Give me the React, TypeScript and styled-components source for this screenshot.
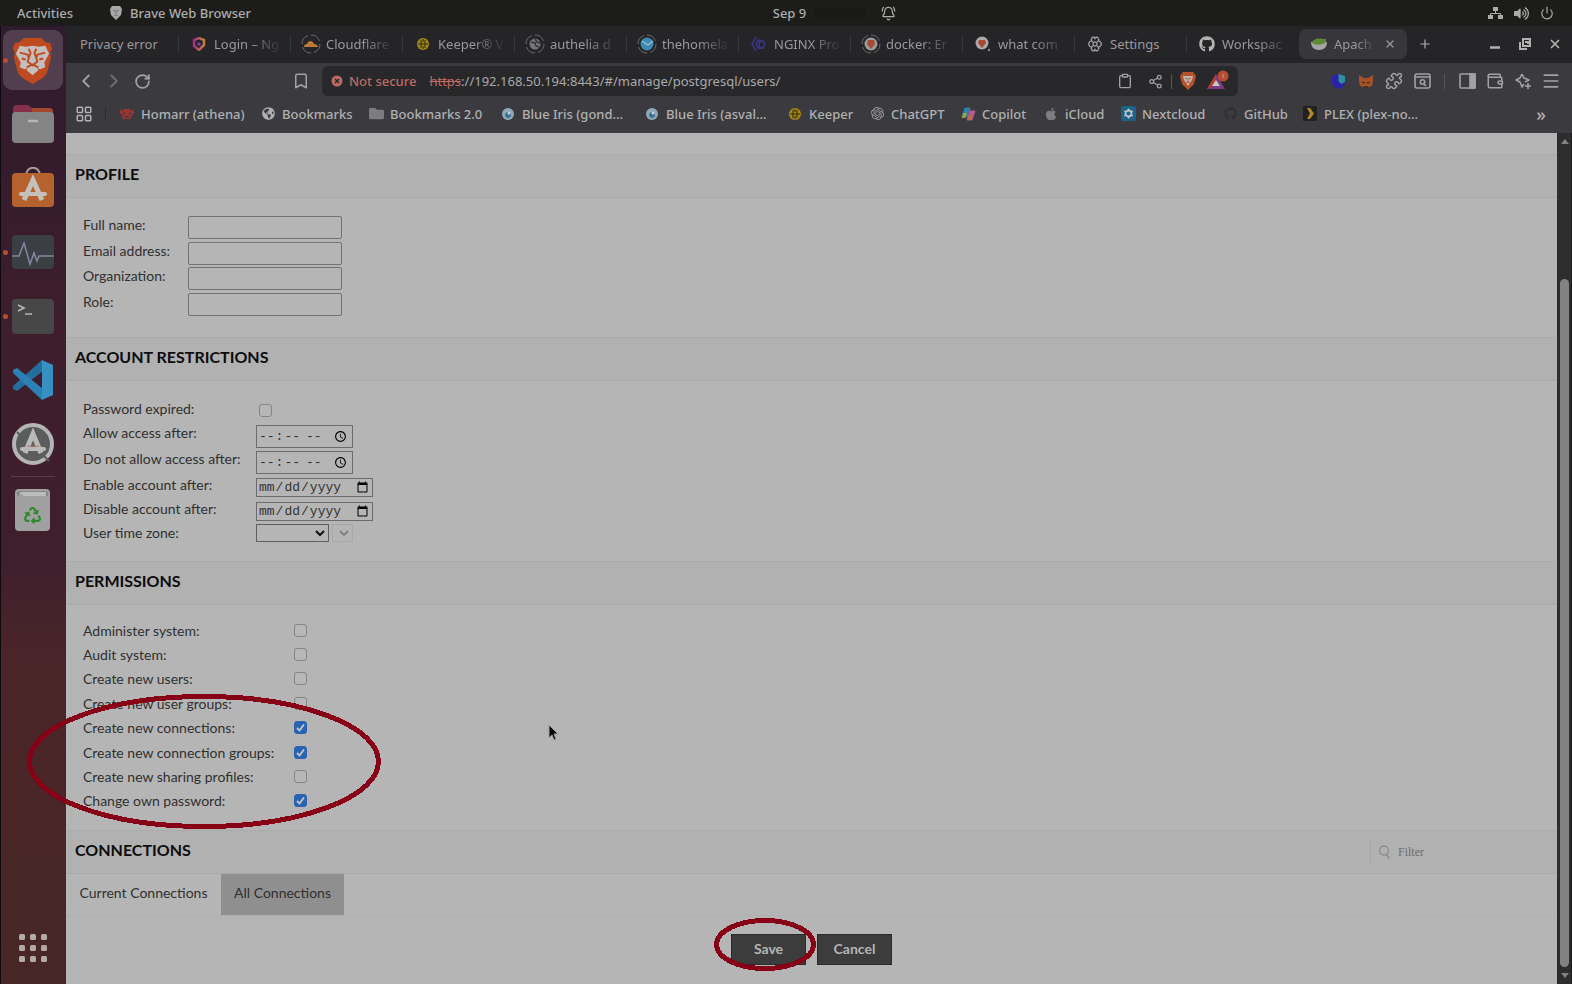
import React from 'react';
import styled, { createGlobalStyle } from 'styled-components';
import {
  ChevronLeft, ChevronRight, RotateCw, Bookmark as BookmarkIcon, Clipboard, Share2, Puzzle,
  Wallet, Menu, X, Plus, LayoutGrid, BellRing, Power,
} from 'lucide-react';
import { FaGithub, FaApple, FaRecycle, FaFolder, FaVolumeUp, FaGlobeAmericas } from 'react-icons/fa';
import { SiOpenai } from 'react-icons/si';

const ui = '"Noto Sans", "Open Sans", sans-serif';
const doc = 'Lato, "Liberation Sans", sans-serif';

const GlobalStyle = createGlobalStyle`
  *, *::before, *::after { box-sizing: border-box; }
  body { margin: 0; background: #1c1c1b; font-family: ${ui}; overflow: hidden; }
  button, input, select { font: inherit; color: inherit; margin: 0; }
  button { border: 0; padding: 0; background: none; }
  a { color: inherit; text-decoration: none; }
  svg { display: block; flex: none; }
`;

const Desktop = styled.div`
  position: relative;
  display: grid;
  grid-template: 26px 1fr / 66px minmax(0, 1fr);
  min-height: 100vh;
`;

const TopBar = styled.header`
  grid-column: 1 / -1;
  display: grid;
  grid-template-columns: 1fr auto 1fr;
  align-items: center;
  padding: 0 18px 0 17px;
  background: #1c1c1b;
  color: #acacaa;
  font-size: 13px;
  font-weight: 500;
`;
const TopGroup = styled.div<{ $end?: boolean }>`
  display: flex;
  align-items: center;
  justify-content: ${(p) => (p.$end ? 'flex-end' : 'flex-start')};
  gap: ${(p) => (p.$end ? 11 : 36)}px;
`;
const AppName = styled.button`
  display: flex;
  align-items: center;
  gap: 7px;
`;
const Clock = styled.div`
  display: flex;
  align-items: center;
  gap: 9px;
  padding-left: 98px;
`;
const ClockBlank = styled.span`
  width: 50px;
  height: 11px;
  margin-right: 7px;
  background: #191916;
`;

const Dock = styled.nav`
  display: flex;
  flex-direction: column;
  align-items: center;
  gap: 4px;
  padding: 4px 2px 6px 0;
  border-left: 1px solid #0e0a0d;
  background: linear-gradient(#2f1b2e 0%, #351c2c 15%, #3e1e2c 32%, #401f2d 56%, #4a2529 66%, #482627 100%);
`;
const DockItem = styled.button<{ $active?: boolean; $running?: boolean }>`
  position: relative;
  display: grid;
  place-items: center;
  width: 60px;
  height: 60px;
  border-radius: 9px;
  background: ${(p) => (p.$active ? '#513f50' : 'transparent')};
  &::before {
    content: '';
    display: ${(p) => (p.$running ? 'block' : 'none')};
    position: absolute;
    left: 0;
    top: 28px;
    width: 5px;
    height: 5px;
    border-radius: 50%;
    background: #b8502f;
  }
`;
const DockRule = styled.hr`
  width: 44px;
  height: 1px;
  margin: -2px 0 -1px;
  border: 0;
  background: #5b3a49;
`;
const DockSpacer = styled.div`
  flex: 1;
`;

const Browser = styled.div`
  display: flex;
  flex-direction: column;
  min-width: 0;
`;
const TabStrip = styled.div`
  display: flex;
  align-items: center;
  height: 37px;
  padding: 0 2px 2px 1px;
  background: #252528;
  color: #99999b;
  font-size: 13px;
`;
const Tab = styled.button<{ $active?: boolean }>`
  display: flex;
  align-items: center;
  gap: 5px;
  width: ${(p) => (p.$active ? 108 : 112)}px;
  height: ${(p) => (p.$active ? 30 : 16)}px;
  padding: 0 ${(p) => (p.$active ? 10 : 4)}px 0 10px;
  border-right: 1px solid ${(p) => (p.$active ? 'transparent' : '#37373a')};
  border-radius: ${(p) => (p.$active ? 7 : 0)}px;
  background: ${(p) => (p.$active ? '#37373b' : 'transparent')};
  text-align: left;
  white-space: nowrap;
  &:first-child { padding-left: 13px; }
  &:nth-last-of-type(6) { border-color: transparent; }
`;
const TabTitle = styled.span<{ $fade?: boolean }>`
  flex: 1;
  line-height: 20px;
  ${(p) => p.$fade && 'mask-image: linear-gradient(90deg, #000 50%, transparent 95%);'}
`;
const TabIcon = styled.span`
  display: grid;
  place-items: center;
  flex: 0 0 20px;
`;
const StripButton = styled.button<{ $push?: boolean }>`
  display: grid;
  place-items: center;
  width: ${(p) => (p.$push ? 36 : 30)}px;
  height: 30px;
  margin-right: ${(p) => (p.$push ? 'auto' : '0')};
  color: #b0b0b0;
`;

const Toolbar = styled.div`
  display: flex;
  align-items: center;
  height: 37px;
  padding: 0 7px 1px 6px;
  background: #3b3b3f;
  color: #a2a2a4;
`;
const ToolButton = styled.button<{ $dim?: boolean; $far?: boolean }>`
  display: grid;
  place-items: center;
  flex: 0 0 28px;
  height: 28px;
  margin-left: ${(p) => (p.$far ? 131 : 0)}px;
  opacity: ${(p) => (p.$dim ? 0.5 : 1)};
`;
const AddressBar = styled.div`
  display: flex;
  align-items: center;
  gap: 2px;
  flex: 1;
  min-width: 0;
  height: 30px;
  margin: 0 86px 0 7px;
  padding: 0 6px 0 9px;
  border-radius: 6px;
  background: #28282b;
  font-size: 13px;
  line-height: 20px;
`;
const NotSecure = styled.span`
  display: flex;
  align-items: center;
  gap: 6px;
  margin-right: 11px;
  color: #bd6a64;
  font-weight: 500;
`;
const Url = styled.span`
  flex: 1;
  color: #a9a9ab;
  white-space: nowrap;
  s { color: #bd6a64; }
`;
const Divider = styled.span<{ $wide?: boolean }>`
  flex: 0 0 1px;
  height: 15px;
  margin: 0 ${(p) => (p.$wide ? 8 : 0)}px;
  background: #56565a;
`;

const BookmarkBar = styled.nav`
  display: flex;
  align-items: center;
  height: 33px;
  padding: 0 26px 6px 9px;
  background: #3b3b3f;
  color: #b0b0b2;
  font-size: 13px;
  font-weight: 500;
`;
const BookmarkRule = styled.span`
  flex: 0 0 1px;
  height: 14px;
  margin: 0 13px 0 12px;
  background: #2c2c2f;
`;
const BookmarkLink = styled.a<{ $width: number }>`
  display: flex;
  align-items: center;
  gap: 6px;
  flex: 0 0 ${(p) => p.$width}px;
  white-space: nowrap;
`;
const BookmarkIconBox = styled.span`
  display: grid;
  place-items: center;
  flex: 0 0 16px;
`;
const More = styled.button`
  margin-left: auto;
  font-size: 18px;
  line-height: 20px;
`;

const Viewport = styled.div`
  flex: 1;
  display: grid;
  grid-template-columns: minmax(0, 1fr) 15px;
`;
const Page = styled.main`
  padding-top: 21px;
  background: #b5b5b5;
  color: #303030;
  font-family: ${doc};
  font-size: 14px;
`;
const SectionHead = styled.div`
  display: flex;
  align-items: center;
  justify-content: space-between;
  height: 44px;
  padding: 0 0 4px 9px;
  border-top: 1px solid #ababab;
  border-bottom: 1px solid #a9a9a9;
  background: #b1b1b1;
`;
const Title = styled.h2`
  margin: 0;
  color: #0c0c0c;
  font-size: 16px;
  font-weight: 700;
  line-height: 24px;
`;
const Fields = styled.div<{ $top: number; $bottom: number }>`
  padding: ${(p) => p.$top}px 0 ${(p) => p.$bottom}px 17px;
`;
const Field = styled.div<{ $label: number; $height: number }>`
  display: grid;
  grid-template-columns: ${(p) => p.$label}px auto;
  justify-content: start;
  align-items: center;
  height: ${(p) => p.$height}px;
  & > label { align-self: start; line-height: 22px; }
`;
const ProfileList = styled.div`
  display: grid;
  height: 102px;
`;
const ProfileField = styled.div`
  display: grid;
  grid-template-columns: 105px auto;
  justify-content: start;
  align-items: start;
  & > label { line-height: 22px; }
`;
const PermissionList = styled.div`
  display: grid;
  height: 195px;
`;
const Permission = styled.div`
  display: grid;
  grid-template-columns: 211px auto;
  justify-content: start;
  align-items: center;
`;
const TextInput = styled.input`
  width: 154px;
  height: 23px;
  margin-top: 2px;
  border: 1px solid #727272;
  border-radius: 2px;
  background: transparent;
`;
const PickerInput = styled.input`
  width: ${(p) => (p.type === 'time' ? 97 : 117)}px;
  height: ${(p) => (p.type === 'time' ? 23 : 19)}px;
  margin-top: 3px;
  padding: 0 1px;
  border: 1px solid #6c6c6c;
  background: transparent;
  font-family: "Liberation Mono", monospace;
  font-size: 13px;
  color: #333;
`;
const ZoneRow = styled.div`
  display: flex;
  align-items: center;
  gap: 3px;
`;
const Select = styled.select<{ $small?: boolean }>`
  width: ${(p) => (p.$small ? 21 : 73)}px;
  height: 18px;
  border: 1px solid ${(p) => (p.$small ? '#a9a9a9' : '#5e5e5e')};
  background: transparent;
  color: #101010;
  &:disabled { color: #808080; opacity: 1; }
`;
const Check = styled.input`
  appearance: none;
  width: 13px;
  height: 13px;
  border: 1px solid #868686;
  border-radius: 3px;
  background: #b7b7b7;
  &:checked {
    border-color: #2c63b0;
    background: #2c63b0;
  }
`;
const CheckBox = styled.span<{ $inset?: boolean }>`
  display: grid;
  margin-left: ${(p) => (p.$inset ? 3 : 0)}px;
  & > * { grid-area: 1 / 1; }
  & > svg { position: relative; pointer-events: none; }
`;
const FilterBox = styled.label`
  display: flex;
  align-items: center;
  gap: 6px;
  width: 187px;
  height: 26px;
  margin-top: 4px;
  padding-left: 7px;
  border-left: 1px solid #a6a6a6;
  color: #8f8f8f;
  input {
    width: 120px;
    border: 0;
    padding: 0;
    background: transparent;
    font-family: "Liberation Serif", serif;
    font-size: 12px;
  }
  input::placeholder { color: #6e6e6e; opacity: 1; }
`;
const ConnectionTabs = styled.div`
  display: flex;
  height: 42px;
  border-bottom: 1px solid #afafaf;
`;
const ConnectionTab = styled.button<{ $selected?: boolean }>`
  width: ${(p) => (p.$selected ? 123 : 155)}px;
  height: 41px;
  padding-bottom: 5px;
  background: ${(p) => (p.$selected ? '#8f8f8f' : 'transparent')};
`;
const Actions = styled.div`
  display: flex;
  justify-content: center;
  gap: 11px;
  padding: 18px 0;
`;
const ActionButton = styled.button`
  width: 75px;
  height: 31px;
  padding-bottom: 2px;
  border: 1px solid #2b2b2b;
  background: #3c3c3c;
  color: #b5b5b5;
  font-weight: 700;
`;

const Scrollbar = styled.div`
  display: flex;
  flex-direction: column;
  align-items: center;
  padding: 6px 0 6px 1px;
  border-right: 1px solid #1b1b1b;
  background: #2d2d2e;
`;
const Thumb = styled.div`
  flex: 1;
  width: 9px;
  margin: 135px 0 6px;
  border-radius: 5px;
  background: #828282;
`;

const Annotation = styled.svg<{ $x: number; $y: number }>`
  position: absolute;
  left: ${(p) => p.$x}px;
  top: ${(p) => p.$y}px;
  pointer-events: none;
`;

const BraveMark = ({ size, color, face }: { size: number; color: string; face: string }) => (
  <svg width={size} height={size} viewBox="-3 0 46 48">
    <path d="M11 1h18l4 4 5 1 2 6-2 4 1 5-4 15q-1 3-5 6l-10 6-10-6q-4-3-5-6L1 21l1-5-2-4 2-6 5-1z" fill={color} />
    <path d="M7 9l6 1 7-1 7 1 6-1 4 8-5 9 1 5-5 2-3-1 1 2-6 5-6-5 1-2-3 1-5-2 1-5-5-9z" fill={face} />
    <g fill="none" stroke={color} strokeWidth="2" strokeLinejoin="round">
      <path d="M7 16l8 2 1 3M33 16l-8 2-1 3M16 12l2 4-3 9 5 4 5-4-3-9 2-4M14 31l6-3 6 3M9 22l4 1M31 22l-4 1" />
    </g>
  </svg>
);

const Ring = ({ children }: { children?: React.ReactNode }) => (
  <svg width="20" height="20" viewBox="0 0 20 20">
    <circle cx="10" cy="10" r="9" fill="none" stroke="#6b6b6e" strokeWidth="1" strokeDasharray="11 3" />
    {children}
  </svg>
);

const Keeper = () => (
  <svg width="14" height="14" viewBox="0 0 14 14">
    <circle cx="7" cy="7" r="6" fill="#a58a17" />
    <path d="M5 3v8M7 2v3M7 9v3M9 3v8M2 7h10" stroke="#2a260f" strokeWidth="1" fill="none" />
  </svg>
);

const Iris = () => (
  <svg width="14" height="14" viewBox="0 0 14 14">
    <circle cx="7" cy="7" r="6" fill="#8fa9b8" />
    <circle cx="7" cy="8" r="3" fill="#3d7391" />
    <circle cx="8" cy="6" r="1.5" fill="#c6d3da" />
  </svg>
);

const tabs: { title: string; icon?: React.ReactNode; fade?: boolean }[] = [
  { title: 'Privacy error' },
  {
    title: 'Login – Ng', fade: true,
    icon: (
      <svg width="14" height="14" viewBox="0 0 14 14">
        <defs><linearGradient id="lg"><stop stopColor="#a82f86" /><stop offset="1" stopColor="#c0803a" /></linearGradient></defs>
        <path d="M7 1l5 2v5l-5 5-5-4V3z" fill="none" stroke="url(#lg)" strokeWidth="2.5" />
        <circle cx="7" cy="7" r="1.8" fill="#7b3fa0" />
      </svg>
    ),
  },
  {
    title: 'Cloudflare', fade: true,
    icon: <Ring><path d="M3 13c0-2 1-3 3-3 1-4 6-4 7 0 2 0 4 1 4 3z" fill="#bb7a35" /></Ring>,
  },
  { title: 'Keeper® V', fade: true, icon: <Keeper /> },
  {
    title: 'authelia d', fade: true,
    icon: <Ring><circle cx="10" cy="10" r="5.5" fill="#77777a" /><path d="M6 8l4 1 1 3 3 1M10 5l2 3 3 1" stroke="#333" strokeWidth="1.5" fill="none" /></Ring>,
  },
  { title: 'thehomela', fade: true, icon: <Ring><circle cx="10" cy="10" r="6.5" fill="#3c8bb4" /><path d="M5 7l6 4 5-4" stroke="#8dbdd3" strokeWidth="1.5" fill="none" /></Ring> },
  {
    title: 'NGINX Pro', fade: true,
    icon: <svg width="16" height="16" viewBox="0 0 16 16"><path d="M5 1L1 8l4 7M8 3l-3 5 3 5M9 5h3l2 3-2 4H9l-1-3z" stroke="#3a337c" strokeWidth="1.8" fill="none" /></svg>,
  },
  { title: 'docker: Er', fade: true, icon: <Ring><circle cx="10" cy="10" r="6.5" fill="#9a9a9a" /><path d="M7 6h6l1 4-4 5-4-5z" fill="#a84a32" /></Ring> },
  {
    title: 'what com', fade: true,
    icon: <svg width="16" height="16" viewBox="0 0 16 16"><circle cx="7" cy="7" r="6.5" fill="#a9a9a9" /><path d="M4 4h6l1 3-4 5-4-5z" fill="#a84a32" /><circle cx="14" cy="14" r="1.2" fill="#888" /></svg>,
  },
  {
    title: 'Settings',
    icon: (
      <svg width="16" height="16" viewBox="0 0 16 16" fill="none" stroke="#99999b" strokeWidth="1.4">
        <path d="M5.500 1.200h1.500l1 1.300 1-1.300h1.500l1.300 2.300-.7 1.600 1.900.2 1.200 1.800v1.800l-1.200 1.800-1.900.2.700 1.600-1.300 2.300H9l-1-1.300-1 1.300H5.500l-1.300-2.300.7-1.600-1.900-.2L1.800 8.900V7.100L3 5.300l1.900-.2-.7-1.600z" />
        <circle cx="8" cy="8" r="2" />
        <path d="M5 5l1.600 1.600M11 5L9.400 6.600M5 11l1.600-1.600M11 11L9.400 9.400" strokeWidth="1" />
      </svg>
    ),
  },
  { title: 'Workspac', fade: true, icon: <FaGithub size={16} color="#b4b4b4" /> },
];

const bookmarks: { label: string; width: number; icon: React.ReactNode }[] = [
  {
    label: 'Homarr (athena)', width: 141,
    icon: <svg width="14" height="12" viewBox="0 0 14 12"><path d="M0 1l3 2 1-2h6l1 2 3-2v4l-2 2-1 4H3L2 7 0 5z" fill="#9c3236" /><path d="M4 4v3M10 4v3M5 9h4" stroke="#3b3b3f" strokeWidth="1.3" /></svg>,
  },
  { label: 'Bookmarks', width: 108, icon: <FaGlobeAmericas size={13} /> },
  { label: 'Bookmarks 2.0', width: 132, icon: <FaFolder size={15} color="#7d7d80" /> },
  { label: 'Blue Iris (gond…', width: 144, icon: <Iris /> },
  { label: 'Blue Iris (asval…', width: 143, icon: <Iris /> },
  { label: 'Keeper', width: 82, icon: <Keeper /> },
  { label: 'ChatGPT', width: 91, icon: <SiOpenai size={13} color="#a0a0a2" /> },
  {
    label: 'Copilot', width: 83,
    icon: (
      <svg width="15" height="14" viewBox="0 0 15 14">
        <path d="M4 1h5L6 10H1z" fill="#2f7fb3" stroke="#2f7fb3" strokeLinejoin="round" />
        <path d="M2 6h4l-2 5H1z" fill="#a3a22e" />
        <path d="M9 4h5l-3 9H6z" fill="#b25a8c" stroke="#b25a8c" strokeLinejoin="round" />
        <path d="M9 8h3l-2 5H6z" fill="#c0694b" />
      </svg>
    ),
  },
  { label: 'iCloud', width: 77, icon: <FaApple size={14} color="#7e7e81" /> },
  {
    label: 'Nextcloud', width: 102,
    icon: <svg width="15" height="15" viewBox="0 0 15 15"><rect width="15" height="15" rx="2" fill="#1d6388" /><circle cx="7.5" cy="7.5" r="3" fill="none" stroke="#b9c6cd" strokeWidth="1.8" /><path d="M7.5 2.5v2M7.5 10.5v2M3.2 5l1.7 1M10.1 9l1.7 1M3.2 10l1.7-1M10.1 6l1.7-1" stroke="#b9c6cd" strokeWidth="1.4" /></svg>,
  },
  { label: 'GitHub', width: 80, icon: <FaGithub size={13} color="#303034" /> },
  {
    label: 'PLEX (plex-no…', width: 126,
    icon: <svg width="14" height="15" viewBox="0 0 14 15"><rect width="14" height="15" rx="1" fill="#212123" /><path d="M4 2h3l4 5.500-4 5.500H4l3-5.500z" fill="#b28a20" /></svg>,
  },
];

const permissions: [string, boolean][] = [
  ['Administer system:', false],
  ['Audit system:', false],
  ['Create new users:', false],
  ['Create new user groups:', false],
  ['Create new connections:', true],
  ['Create new connection groups:', true],
  ['Create new sharing profiles:', false],
  ['Change own password:', true],
];

const Tick = ({ id, checked, inset }: { id: string; checked?: boolean; inset?: boolean }) => (
  <CheckBox $inset={inset}>
    <Check id={id} type="checkbox" defaultChecked={checked} />
    {checked && (
      <svg width="13" height="13" viewBox="0 0 13 13">
        <path d="M3 7l2.500 2.500L10 3.500" fill="none" stroke="#c4c9d0" strokeWidth="1.8" />
      </svg>
    )}
  </CheckBox>
);

export default function App() {
  return (
    <Desktop>
      <GlobalStyle />
      <TopBar>
        <TopGroup>
          <button>Activities</button>
          <AppName>
            <svg width="14" height="14" viewBox="0 0 14 14">
              <path d="M3 0h8l2 3-1 6-5 5-5-5-1-6z" fill="#a9a9a9" />
              <path d="M4 4l2 1M10 4L8 5M7 4v4M5 9l2 1 2-1" stroke="#6f6f6f" fill="none" />
            </svg>
            Brave Web Browser
          </AppName>
        </TopGroup>
        <Clock>
          <span>Sep 9</span>
          <ClockBlank />
          <BellRing size={15} />
        </Clock>
        <TopGroup $end>
          <svg width="15" height="14" viewBox="0 0 15 14" fill="currentColor">
            <path d="M5 1h5v4H5zM0 9h5v4H0zM10 9h5v4h-5z" />
            <path d="M7.500 5v2.500M2.500 9V7.500h10V9" stroke="currentColor" fill="none" />
          </svg>
          <FaVolumeUp size={15} />
          <Power size={14} />
        </TopGroup>
      </TopBar>

      <Dock aria-label="Dock">
        <DockItem $active $running aria-label="Brave">
          <BraveMark size={47} color="#c04a20" face="#c4bebd" />
        </DockItem>
        <DockItem aria-label="Files">
          <svg width="42" height="40" viewBox="0 0 42 40">
            <path d="M1 5a4 4 0 0 1 4-4h11l4 3h17a4 4 0 0 1 4 4v10H1z" fill="#84304a" />
            <path d="M20 4h17a4 4 0 0 1 4 4v8H20z" fill="#a2482f" />
            <rect y="8" width="42" height="31" rx="4" fill="#838483" />
            <path d="M16 17h10" stroke="#b5b5b5" strokeWidth="2.500" />
          </svg>
        </DockItem>
        <DockItem aria-label="Software">
          <svg width="42" height="42" viewBox="0 0 42 42">
            <path d="M14 9c0-11 14-11 14 0" fill="none" stroke="#a99a98" strokeWidth="2" />
            <rect y="6" width="42" height="34" rx="4" fill="#b5622f" />
            <path d="M12 33l9-20 9 20" fill="none" stroke="#c6c0bb" strokeWidth="5" />
            <path d="M9 27h24" stroke="#c6c0bb" strokeWidth="4" strokeLinecap="round" />
          </svg>
        </DockItem>
        <DockItem $running aria-label="System Monitor">
          <svg width="42" height="34" viewBox="0 0 42 34">
            <rect width="42" height="34" rx="4" fill="#3b3f43" />
            <path d="M0 21h7l5-13 6 21 4-11 3 8 2-5h15" fill="none" stroke="#8288a0" strokeWidth="1.500" />
          </svg>
        </DockItem>
        <DockItem $running aria-label="Terminal">
          <svg width="42" height="35" viewBox="0 0 42 35">
            <rect width="42" height="35" rx="4" fill="#474747" />
            <path d="M6 6l6 3-6 3M13 15h7" fill="none" stroke="#b5b5b5" strokeWidth="1.600" />
          </svg>
        </DockItem>
        <DockItem aria-label="Visual Studio Code">
          <svg width="42" height="40" viewBox="0 0 42 40">
            <path d="M30 0L1 26v3l4 2 26-20z" fill="#256f9f" />
            <path d="M30 40L1 13v-3l4-2 26 21z" fill="#2b80b4" />
            <path d="M30 0l11 5v30l-11 5z" fill="#3790c2" />
          </svg>
        </DockItem>
        <DockItem aria-label="Software Updater">
          <svg width="42" height="42" viewBox="0 0 42 42">
            <circle cx="21" cy="21" r="19" fill="#5b5d5d" stroke="#b5b5b5" strokeWidth="4" />
            <path d="M5 9l5 5M32 33l5 5" stroke="#5b5d5d" strokeWidth="2" />
            <path d="M13 30l8-19 8 19" fill="none" stroke="#b9b9b9" strokeWidth="5" />
            <path d="M10 26h22" stroke="#b9b9b9" strokeWidth="4" strokeLinecap="round" />
            <path d="M15 23h12" stroke="#b5786c" strokeWidth="1" />
          </svg>
        </DockItem>
        <DockRule />
        <DockItem aria-label="Trash">
          <svg width="35" height="42" viewBox="0 0 35 42">
            <rect width="35" height="42" rx="4" fill="#a0a0a0" />
            <path d="M3 7V3h29v4" fill="none" stroke="#6f6f6f" strokeWidth="1" />
            <path d="M4 3h27v4H9z" fill="#bcbcbc" />
            <g transform="translate(9 18)"><FaRecycle size={17} color="#2f8a2a" /></g>
          </svg>
        </DockItem>
        <DockSpacer />
        <DockItem aria-label="Show Applications">
          <svg width="30" height="30" viewBox="0 0 30 30" fill="#b3a9a7">
            {[0, 11, 22].map((y) => [0, 11, 22].map((x) => <rect key={`${x}-${y}`} x={x + 1} y={y + 1} width="6" height="6" rx="1.500" />))}
          </svg>
        </DockItem>
      </Dock>

      <Browser>
        <TabStrip>
          {tabs.map((t) => (
            <Tab key={t.title}>
              {t.icon && <TabIcon>{t.icon}</TabIcon>}
              <TabTitle $fade={t.fade}>{t.title}</TabTitle>
            </Tab>
          ))}
          <Tab $active>
            <TabIcon>
              <svg width="16" height="14" viewBox="0 0 16 14">
                <path d="M0 5h16c0 5-3 8-8 8S0 10 0 5z" fill="#a5a5a5" />
                <path d="M1 6c0-3 3-3 4-4 3-1 6 0 10 0v3c-3 3-9 4-14 1z" fill="#5d8a32" />
              </svg>
            </TabIcon>
            <TabTitle $fade>Apach</TabTitle>
            <X size={12} strokeWidth={2.5} />
          </Tab>
          <StripButton $push aria-label="New tab"><Plus size={14} /></StripButton>
          <StripButton aria-label="Minimize"><svg width="10" height="12"><path d="M0 9.500h10" stroke="currentColor" strokeWidth="2.500" /></svg></StripButton>
          <StripButton aria-label="Restore">
            <svg width="12" height="12" viewBox="0 0 12 12" fill="none" stroke="currentColor" strokeWidth="2"><path d="M4 1h7v7H4zM1 4v7h7M6 4h3v2" /></svg>
          </StripButton>
          <StripButton aria-label="Close"><X size={14} strokeWidth={3} /></StripButton>
        </TabStrip>

        <Toolbar>
          <ToolButton aria-label="Back"><ChevronLeft size={22} /></ToolButton>
          <ToolButton $dim aria-label="Forward"><ChevronRight size={22} /></ToolButton>
          <ToolButton aria-label="Reload"><RotateCw size={17} strokeWidth={2.5} /></ToolButton>
          <ToolButton $far aria-label="Bookmark this page"><BookmarkIcon size={18} /></ToolButton>
          <AddressBar>
            <NotSecure>
              <svg width="12" height="12" viewBox="0 0 12 12"><circle cx="6" cy="6" r="5.500" fill="#bd6a64" /><path d="M4 4l4 4M8 4l-4 4" stroke="#28282b" strokeWidth="1.500" /></svg>
              Not secure
            </NotSecure>
            <Url><s>https</s>://192.168.50.194:8443/#/manage/postgresql/users/</Url>
            <ToolButton aria-label="Copy link"><Clipboard size={16} /></ToolButton>
            <ToolButton aria-label="Share"><Share2 size={15} /></ToolButton>
            <Divider />
            <ToolButton aria-label="Shields">
              <svg width="16" height="18" viewBox="0 0 16 18">
                <path d="M3 0h10l3 4-2 8-6 6-6-6-2-8z" fill="#b5522b" />
                <path d="M3 4h10l-1 4-4 6-4-6z" fill="#c0b8b4" />
                <path d="M5 6l2 1M11 6L9 7M8 6v4M6 11l2-1 2 1" stroke="#b5522b" fill="none" />
              </svg>
            </ToolButton>
            <ToolButton aria-label="Rewards">
              <svg width="24" height="22" viewBox="0 0 24 22">
                <path d="M10 4L1 19h18z" fill="#7c3a80" />
                <path d="M10 4L1 19l9-5z" fill="#b0402c" />
                <path d="M10 10l-4 6h8z" fill="#c9c4c8" />
                <circle cx="17" cy="6" r="5.500" fill="#b54c33" />
                <path d="M17 4v4" stroke="#d0a090" />
              </svg>
            </ToolButton>
          </AddressBar>
          <ToolButton aria-label="Password extension">
            <svg width="15" height="17" viewBox="0 0 15 17"><path d="M7.500 1L14 3v6c0 3-3 6-6.500 7C4 15 1 12 1 9V3z" fill="#2a22a8" /><path d="M7.500 1L14 3v6l-4 2-2.500-3z" fill="#2f8f9c" /></svg>
          </ToolButton>
          <ToolButton aria-label="MetaMask">
            <svg width="16" height="15" viewBox="0 0 16 15"><path d="M1 1l5 3h4l5-3v6l-1 5-4 1-2 1-2-1-4-1-1-5z" fill="#a5522a" /><path d="M4 8l3 1M12 8L9 9M6 13h4" stroke="#3a2a24" strokeWidth="1.300" /></svg>
          </ToolButton>
          <ToolButton aria-label="Extensions">
            <Puzzle size={18} />
          </ToolButton>
          <ToolButton aria-label="Search tabs">
            <svg width="17" height="16" viewBox="0 0 17 16" fill="none" stroke="currentColor" strokeWidth="1.600"><rect x="1" y="1" width="15" height="14" rx="2" /><path d="M1 4h15M10 11l2 2" /><circle cx="8.500" cy="9" r="2.200" /></svg>
          </ToolButton>
          <Divider $wide />
          <ToolButton aria-label="Side panel">
            <svg width="17" height="16" viewBox="0 0 17 16" fill="none" stroke="currentColor" strokeWidth="1.600"><rect x="1" y="1" width="15" height="14" rx="1" /><path d="M11 1h5v14h-5z" fill="currentColor" /></svg>
          </ToolButton>
          <ToolButton aria-label="Wallet"><Wallet size={18} /></ToolButton>
          <ToolButton aria-label="Leo">
            <svg width="17" height="17" viewBox="0 0 17 17" fill="none" stroke="currentColor" strokeWidth="1.600" strokeLinejoin="round"><path d="M7 1l2 4 5 2-4 2M7 1L5 5 1 7l4 2 2 5 2-3M13 10v6M10 13h6" /></svg>
          </ToolButton>
          <ToolButton aria-label="Menu"><Menu size={20} /></ToolButton>
        </Toolbar>

        <BookmarkBar>
          <LayoutGrid size={18} />
          <BookmarkRule />
          {bookmarks.map((b) => (
            <BookmarkLink key={b.label} href="#" $width={b.width}>
              <BookmarkIconBox>{b.icon}</BookmarkIconBox>
              {b.label}
            </BookmarkLink>
          ))}
          <More aria-label="More bookmarks">»</More>
        </BookmarkBar>

        <Viewport>
          <Page>
            <SectionHead><Title>PROFILE</Title></SectionHead>
            <Fields $top={16} $bottom={21}>
              <ProfileList>
                {['Full name:', 'Email address:', 'Organization:', 'Role:'].map((l) => (
                  <ProfileField key={l}>
                    <label htmlFor={l}>{l}</label>
                    <TextInput id={l} type="text" />
                  </ProfileField>
                ))}
              </ProfileList>
            </Fields>

            <SectionHead><Title>ACCOUNT RESTRICTIONS</Title></SectionHead>
            <Fields $top={17} $bottom={17}>
              <Field $label={173} $height={24}>
                <label htmlFor="expired">Password expired:</label>
                <Tick id="expired" inset />
              </Field>
              <Field $label={173} $height={26}>
                <label htmlFor="allow">Allow access after:</label>
                <PickerInput id="allow" type="time" />
              </Field>
              <Field $label={173} $height={26}>
                <label htmlFor="deny">Do not allow access after:</label>
                <PickerInput id="deny" type="time" />
              </Field>
              <Field $label={173} $height={24}>
                <label htmlFor="enable">Enable account after:</label>
                <PickerInput id="enable" type="date" />
              </Field>
              <Field $label={173} $height={24}>
                <label htmlFor="disable">Disable account after:</label>
                <PickerInput id="disable" type="date" />
              </Field>
              <Field $label={173} $height={22}>
                <label htmlFor="zone">User time zone:</label>
                <ZoneRow>
                  <Select id="zone" />
                  <Select $small disabled aria-label="Time zone city" />
                </ZoneRow>
              </Field>
            </Fields>

            <SectionHead><Title>PERMISSIONS</Title></SectionHead>
            <Fields $top={13} $bottom={17}>
              <PermissionList>
                {permissions.map(([label, checked]) => (
                  <Permission key={label}>
                    <label htmlFor={label}>{label}</label>
                    <Tick id={label} checked={checked} />
                  </Permission>
                ))}
              </PermissionList>
            </Fields>

            <SectionHead>
              <Title>CONNECTIONS</Title>
              <FilterBox>
                <svg width="14" height="14" viewBox="0 0 14 14" fill="none" stroke="currentColor" strokeWidth="1.500">
                  <circle cx="6" cy="5.500" r="4.500" />
                  <path d="M8.500 9.500l3 4" />
                </svg>
                <input type="text" placeholder="Filter" aria-label="Filter" />
              </FilterBox>
            </SectionHead>
            <ConnectionTabs>
              <ConnectionTab>Current Connections</ConnectionTab>
              <ConnectionTab $selected>All Connections</ConnectionTab>
            </ConnectionTabs>
            <Actions>
              <ActionButton>Save</ActionButton>
              <ActionButton>Cancel</ActionButton>
            </Actions>
          </Page>
          <Scrollbar aria-hidden>
            <svg width="8" height="5"><path d="M4 0l4 5H0z" fill="#828282" /></svg>
            <Thumb />
            <svg width="8" height="5"><path d="M4 5l4-5H0z" fill="#828282" /></svg>
          </Scrollbar>
        </Viewport>
      </Browser>

      <Annotation $x={27} $y={694} width="354" height="135" shapeRendering="crispEdges">
        <ellipse cx="177" cy="67.500" rx="174.500" ry="65" fill="none" stroke="#880015" strokeWidth="5" />
      </Annotation>
      <Annotation $x={714} $y={918} width="102" height="53" shapeRendering="crispEdges">
        <ellipse cx="51" cy="26.500" rx="48.500" ry="24" fill="none" stroke="#880015" strokeWidth="5" />
      </Annotation>
      <Annotation $x={548} $y={724} width="11" height="17">
        <path d="M1 1v13l3-3 2 5 2-1-2-5h4z" fill="#0b0b0b" stroke="#9c9c9c" strokeWidth="1" />
      </Annotation>
    </Desktop>
  );
}
